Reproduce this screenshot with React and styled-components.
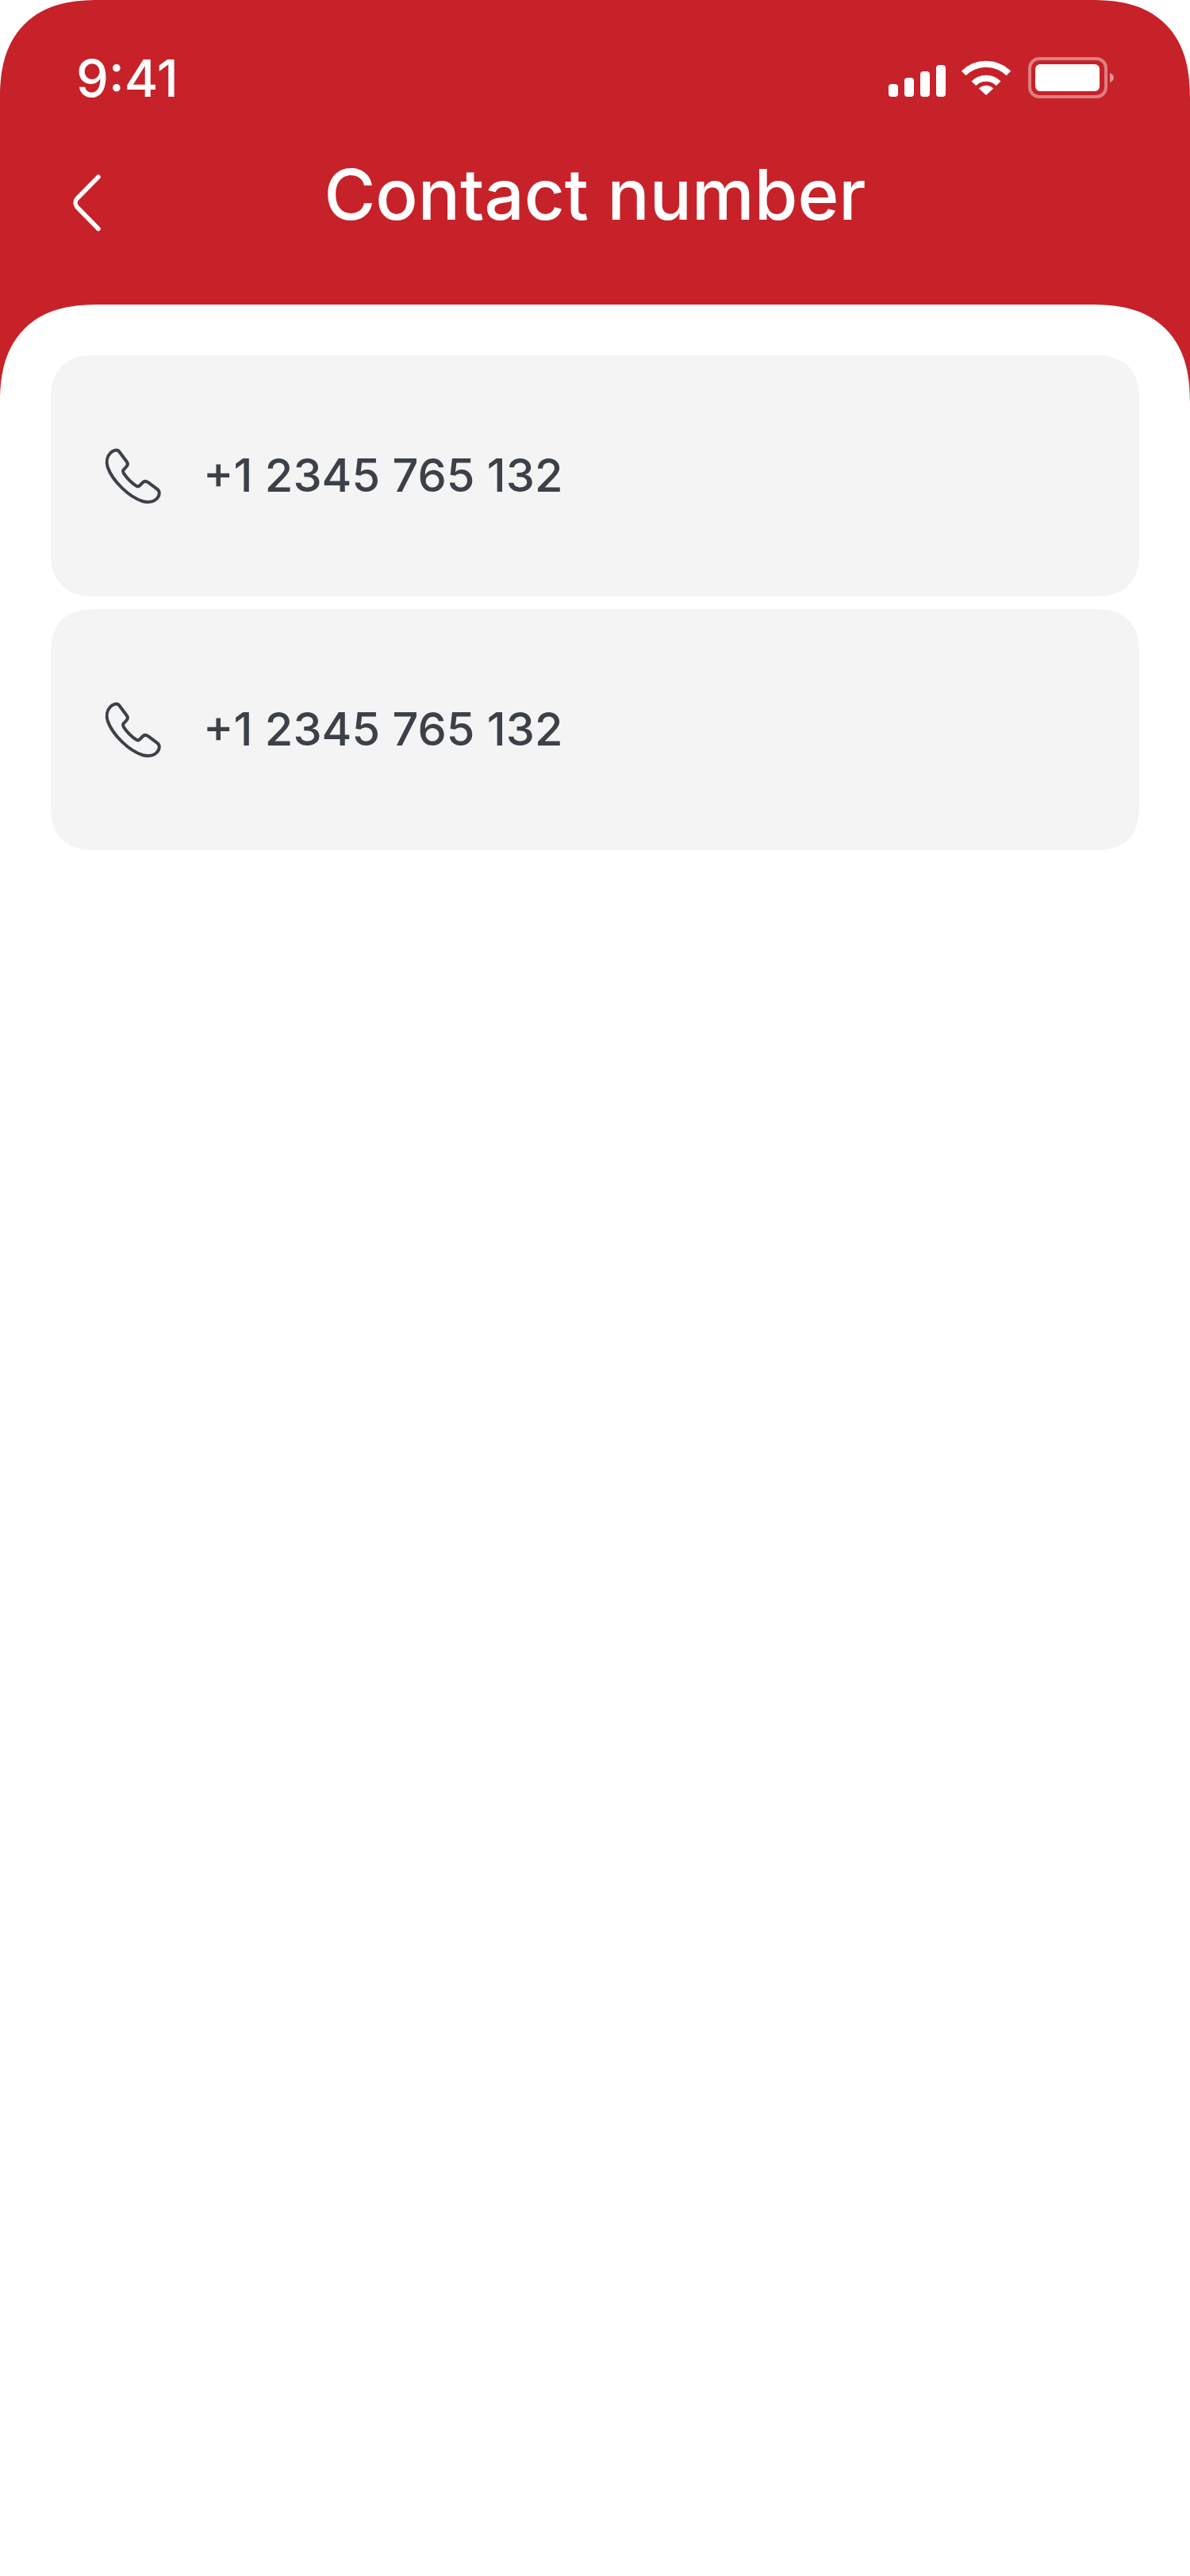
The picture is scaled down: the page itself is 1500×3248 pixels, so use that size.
import React from "react";
import styled, { createGlobalStyle } from "styled-components";

const Global = createGlobalStyle`
  html, body { margin: 0; padding: 0; background: #fff; }
  * { box-sizing: border-box; }
`;

const Screen = styled.div`
  width: 1500px;
  height: 3248px;
  display: flex;
  flex-direction: column;
  background: #c72229;
  border-radius: 125px 125px 0 0;
  corner-shape: superellipse(1.3);
  font-family: Inter, "Liberation Sans", sans-serif;
`;

const Header = styled.header`
  height: 384px;
  flex: none;
  display: flex;
  flex-direction: column;
  color: #fff;
`;

const StatusBar = styled.div`
  height: 196px;
  padding: 0 96px;
  display: flex;
  align-items: center;
  justify-content: space-between;
`;

const Time = styled.span`
  font-size: 65px;
  font-weight: 500;
  line-height: 1;
`;

const StatusIcons = styled.div`
  display: flex;
  align-items: center;
  gap: 20px;
`;

const NavBar = styled.nav`
  height: 98px;
  padding: 0 92px;
  display: grid;
  grid-template-columns: 1fr auto 1fr;
  align-items: center;
`;

const Title = styled.h1`
  margin: 0;
  font-size: 88.5px;
  font-weight: 500;
  line-height: 1;
`;

const BackButton = styled.button`
  width: 40px;
  height: 72px;
  margin-top: 21px;
  padding: 0;
  border: 0;
  background: none;
  display: block;
  svg { display: block; }
`;

const Panel = styled.main`
  flex: 1;
  background: #fff;
  border-radius: 125px 125px 0 0;
  corner-shape: superellipse(1.3);
  padding: 64px;
  display: flex;
  flex-direction: column;
  gap: 16px;
`;

const ContactCard = styled.div`
  height: 304px;
  background: #f4f4f4;
  border-radius: 56px;
  corner-shape: superellipse(1.3);
  padding-left: 66px;
  display: flex;
  align-items: center;
  gap: 52px;
`;

const PhoneNumber = styled.span`
  font-size: 57.7px;
  font-weight: 450;
  line-height: 1;
  color: #3c4149;
`;

const PhoneIcon = () => (
  <svg width="74" height="74" viewBox="91 67 222 222" fill="none" stroke="#3c4149" strokeWidth="12" strokeLinejoin="round">
    <path d="M118 92C128 80 145 76 153 88L180 124C186 132 184 138 180 142L168 155C164 160 166 164 170 170C182 188 200 205 216 216C222 220 226 218 230 214L242 202C248 196 254 198 262 203L295 228C306 236 306 250 296 262C284 276 262 280 240 274C190 258 128 200 108 145C102 125 106 104 118 92Z" />
  </svg>
);

const SignalIcon = () => (
  <svg width="72" height="52" viewBox="0 0 72 52" fill="#fff">
    <rect x="0" y="34" width="12" height="16" rx="4" />
    <rect x="20" y="26" width="12" height="24" rx="4" />
    <rect x="40" y="18" width="12" height="32" rx="4" />
    <rect x="60" y="10" width="12" height="40" rx="4" />
  </svg>
);

const WifiIcon = () => (
  <svg width="64" height="52" viewBox="0 0 64 52" fill="none" stroke="#fff" strokeWidth="8">
    <path d="M2.7 20.5a40 40 0 0 1 56.600 0" />
    <path d="M15.400 33.200a22 22 0 0 1 31.200 0" />
    <path d="M21.800 39.500a13 13 0 0 1 18.400 0L31 48Z" fill="#fff" stroke="none" />
  </svg>
);

const BatteryIcon = () => (
  <svg width="108" height="52" viewBox="0 0 108 52" fill="none">
    <rect x="2" y="2" width="96" height="48" rx="12" stroke="#fff" strokeOpacity="0.42" strokeWidth="4" />
    <rect x="9" y="9" width="81" height="34" rx="6" fill="#fff" />
    <path d="M103 20C106 21 108 23.500 108 26C108 28.500 106 31 103 32Z" fill="#fff" fillOpacity="0.5" />
  </svg>
);

const ChevronIcon = () => (
  <svg width="40" height="72" viewBox="0 0 40 72" fill="none" stroke="#fff" strokeWidth="5.500" strokeLinecap="round" strokeLinejoin="round">
    <path d="M32 3L5 30.500C2.500 33.500 2.500 38 5 41L32 68.500" />
  </svg>
);

const numbers = ["+1 2345 765 132", "+1 2345 765 132"];

export default function App() {
  return (
    <>
      <Global />
      <Screen>
        <Header>
          <StatusBar>
            <Time>9:41</Time>
            <StatusIcons>
              <SignalIcon />
              <WifiIcon />
              <BatteryIcon />
            </StatusIcons>
          </StatusBar>
          <NavBar>
            <BackButton aria-label="Back"><ChevronIcon /></BackButton>
            <Title>Contact number</Title>
          </NavBar>
        </Header>
        <Panel>
          {numbers.map((n, i) => (
            <ContactCard key={i}>
              <PhoneIcon />
              <PhoneNumber>{n}</PhoneNumber>
            </ContactCard>
          ))}
        </Panel>
      </Screen>
    </>
  );
}
